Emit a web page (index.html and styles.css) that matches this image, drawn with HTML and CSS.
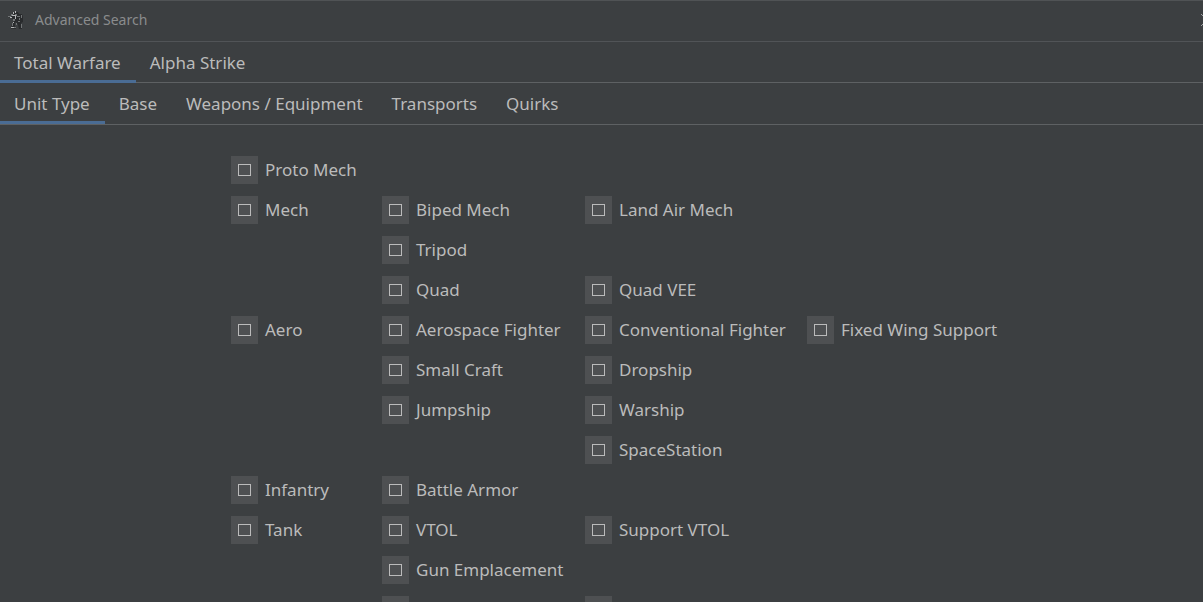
FILE: index.html
```html
<!DOCTYPE html>
<html lang="en">
<head>
<meta charset="utf-8">
<meta name="viewport" content="width=device-width, initial-scale=1">
<title>Advanced Search</title>
<link rel="stylesheet" href="styles.css">
</head>
<body>
<header class="titlebar">
  <svg class="app-icon" viewBox="0 0 16 20" aria-hidden="true">
    <path class="icon-dark" d="M5 2h5l1 2h3l1 3v5l-2 1 1 3v3h-3l-1-4-2-3-1 1v3l1 3H3l1-5 2-3-2-3-4-1V7l3-1z"/>
    <path class="icon-mid" d="M0 6h3v1H0zM3 4h2v2H3zM7 4h2v2H7zM9 6h3v1H9zM13 5h1v3h-1zM5 9h2v2H5zM4 13h1v3H4zM10 11h2v1h-2zM13 14h1v4h-1zM8 13h1v2H8zM11 8h1v2h-1zM6 17h2v1H6z"/>
    <path class="icon-light" d="M5 2h1v2H5zM7 1h1v2H7zM4 5h4v1H4zM2 7h2v1H2zM7 6h1v3H7zM3 17h3v1H3zM5 12h1v1H5z"/>
  </svg>
  <h1 class="title">Advanced Search</h1>
  <button class="close" type="button" aria-label="Close">
    <svg class="close-icon" viewBox="0 0 12 12" aria-hidden="true"><path d="M0 0l12 12M12 0L0 12"/></svg>
  </button>
</header>
<nav class="tabs" role="tablist" aria-label="Game system">
  <button class="tab tab-active" type="button" role="tab" aria-selected="true">Total Warfare</button>
  <button class="tab" type="button" role="tab" aria-selected="false">Alpha Strike</button>
</nav>
<nav class="tabs" role="tablist" aria-label="Search section">
  <button class="tab tab-active" type="button" role="tab" aria-selected="true">Unit Type</button>
  <button class="tab" type="button" role="tab" aria-selected="false">Base</button>
  <button class="tab" type="button" role="tab" aria-selected="false">Weapons / Equipment</button>
  <button class="tab" type="button" role="tab" aria-selected="false">Transports</button>
  <button class="tab" type="button" role="tab" aria-selected="false">Quirks</button>
</nav>
<main class="units">
  <label class="unit col-1"><input class="box" type="checkbox">Proto Mech</label>
  <label class="unit col-1"><input class="box" type="checkbox">Mech</label>
  <label class="unit col-2"><input class="box" type="checkbox">Biped Mech</label>
  <label class="unit col-3"><input class="box" type="checkbox">Land Air Mech</label>
  <label class="unit col-2"><input class="box" type="checkbox">Tripod</label>
  <label class="unit col-2"><input class="box" type="checkbox">Quad</label>
  <label class="unit col-3"><input class="box" type="checkbox">Quad VEE</label>
  <label class="unit col-1"><input class="box" type="checkbox">Aero</label>
  <label class="unit col-2"><input class="box" type="checkbox">Aerospace Fighter</label>
  <label class="unit col-3"><input class="box" type="checkbox">Conventional Fighter</label>
  <label class="unit col-4"><input class="box" type="checkbox">Fixed Wing Support</label>
  <label class="unit col-2"><input class="box" type="checkbox">Small Craft</label>
  <label class="unit col-3"><input class="box" type="checkbox">Dropship</label>
  <label class="unit col-2"><input class="box" type="checkbox">Jumpship</label>
  <label class="unit col-3"><input class="box" type="checkbox">Warship</label>
  <label class="unit col-3"><input class="box" type="checkbox">SpaceStation</label>
  <label class="unit col-1"><input class="box" type="checkbox">Infantry</label>
  <label class="unit col-2"><input class="box" type="checkbox">Battle Armor</label>
  <label class="unit col-1"><input class="box" type="checkbox">Tank</label>
  <label class="unit col-2"><input class="box" type="checkbox">VTOL</label>
  <label class="unit col-3"><input class="box" type="checkbox">Support VTOL</label>
  <label class="unit col-2"><input class="box" type="checkbox">Gun Emplacement</label>
  <span class="unit col-2"><input class="box" type="checkbox" aria-label="Unit type"></span>
  <span class="unit col-3"><input class="box" type="checkbox" aria-label="Unit type"></span>
</main>
</body>
</html>
```
FILE: styles.css
```css
*,
*::before {
  box-sizing: border-box;
}

body {
  margin: 0;
  height: 100vh;
  overflow: hidden;
  display: flex;
  flex-direction: column;
  background: #3c3f41;
  color: #bbbbbb;
  font: 17px/24px "Noto Sans", sans-serif;
}

.titlebar {
  flex: none;
  display: flex;
  align-items: center;
  height: 42px;
  padding: 0 0 2px 8px;
  border-top: 1px solid #505355;
  border-bottom: 1px solid #515457;
}

.app-icon {
  flex: none;
  width: 16px;
  height: 20px;
  margin-right: 11px;
}

.icon-dark {
  fill: #292b2d;
}

.icon-mid {
  fill: #727577;
}

.icon-light {
  fill: #b5b7b8;
}

.title {
  margin: 0;
  color: #8a8c8d;
  font-size: 14px;
  font-weight: 400;
  line-height: 20px;
}

.close {
  flex: none;
  width: 12px;
  height: 12px;
  margin: 0 -10px 0 auto;
  padding: 0;
  border: 0;
  background: none;
}

.close-icon {
  display: block;
  fill: none;
  stroke: #a0a2a3;
}

.tabs {
  flex: none;
  display: flex;
  height: 41px;
  border-bottom: 1px solid #5e6163;
}

.tabs + .tabs {
  height: 42px;
}

.tab {
  height: 41px;
  padding: 4px 15px 0 14px;
  border: 0;
  border-bottom: 3px solid transparent;
  background: none;
  color: inherit;
  font: inherit;
  white-space: nowrap;
}

.tab-active {
  border-bottom-color: #4a6c94;
}

.units {
  flex: none;
  display: grid;
  grid-template-columns: 151px 203px 222px auto;
  justify-content: start;
  grid-auto-rows: 28px;
  row-gap: 12px;
  padding: 31px 0 0 231px;
}

.unit {
  display: flex;
  align-items: center;
  gap: 7px;
  white-space: nowrap;
}

.col-1 {
  grid-column: 1;
}

.col-2 {
  grid-column: 2;
}

.col-3 {
  grid-column: 3;
}

.col-4 {
  grid-column: 4;
}

.box {
  appearance: none;
  flex: none;
  display: grid;
  place-items: center;
  width: 27px;
  height: 28px;
  margin: 0;
  background: #4e5052;
}

.box::before {
  content: "";
  width: 13px;
  height: 12px;
  border: 1px solid #bbbbbb;
}

.box:checked::before {
  background: #bbbbbb;
}
```
